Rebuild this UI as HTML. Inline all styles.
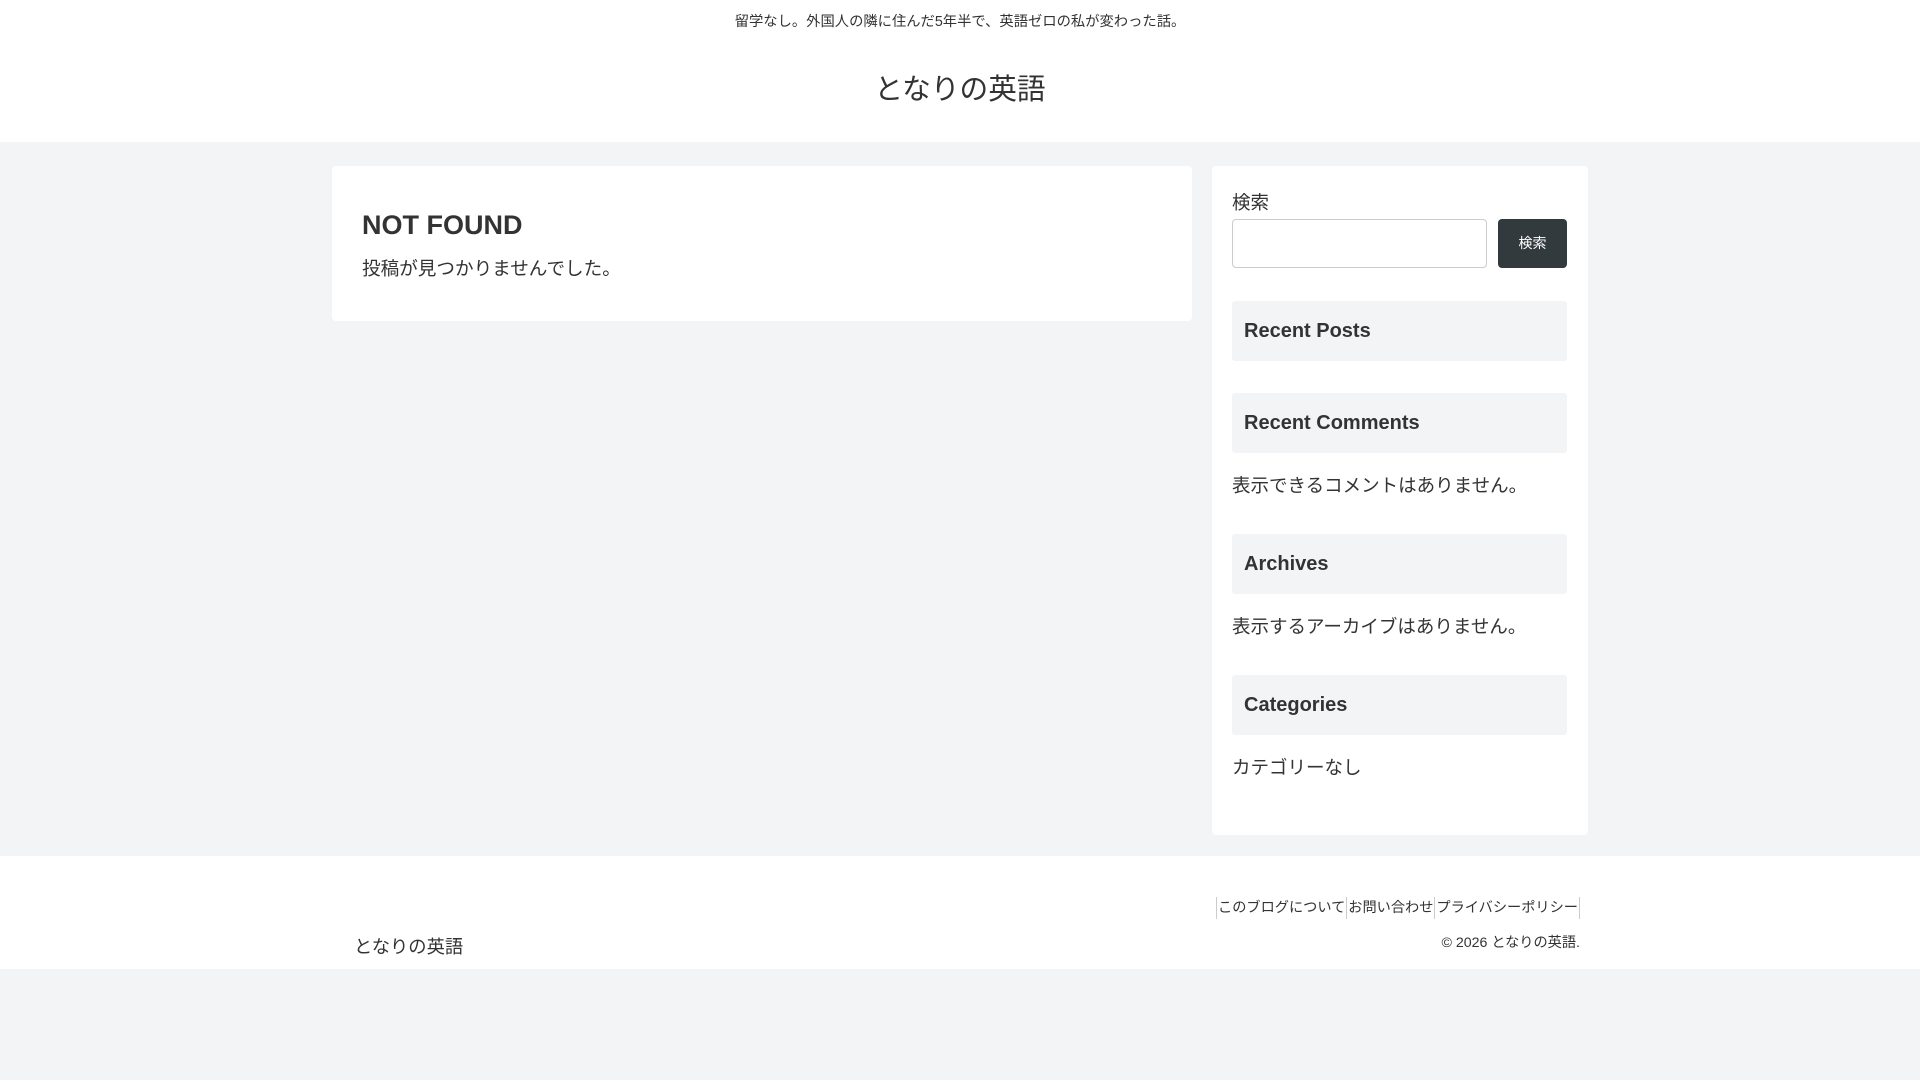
<!DOCTYPE html>
<html><head><meta charset="utf-8"><style>
*{box-sizing:border-box;margin:0;padding:0}
body{width:1920px;height:1080px;background:#f3f4f6;font-family:"Liberation Sans","Noto Sans CJK JP",sans-serif;color:#333;position:relative;overflow:hidden}
.header{position:absolute;left:0;top:0;width:1920px;height:142px;background:#fff}
.tag{position:absolute;top:10px;width:100%;text-align:center;font-size:14.3px;color:#333}
.title{position:absolute;top:67px;width:100%;text-align:center;font-size:28.7px;color:#333}
.main{position:absolute;left:332px;top:166px;width:860px;height:155px;background:#fff;border-radius:4px}
.main h1{position:absolute;left:30px;top:44px;font-size:27px;font-weight:bold}
.main p{position:absolute;left:30px;top:88px;font-size:18.6px}
.side{position:absolute;left:1212px;top:166px;width:376px;height:669px;background:#fff;border-radius:4px}
.lbl{position:absolute;left:20px;top:23px;font-size:18.5px}
.inp{position:absolute;left:20px;top:53px;width:255px;height:49px;border:1px solid #ccc;border-radius:4px}
.btn{position:absolute;left:286px;top:53px;width:69px;height:49px;background:#333a3e;border-radius:4px;color:#fff;font-size:14px;text-align:center;line-height:49px}
.wh{position:absolute;left:20px;width:335px;height:60px;background:#f3f4f6;border-radius:3px;font-size:20px;font-weight:bold;padding-left:12px;line-height:61px}
.tx{position:absolute;left:20px;font-size:18.5px}
.footer{position:absolute;left:0;top:856px;width:1920px;height:113px;background:#fff}
.fname{position:absolute;left:354px;top:77px;font-size:18.3px}
.links{position:absolute;right:340px;top:41px;font-size:14.2px;display:flex;height:22px;align-items:center}
.links span{border-left:1px solid #ccc;padding:0 1px;line-height:22px}
.links span:last-child{border-right:1px solid #ccc}
.copy{position:absolute;right:340px;top:76px;font-size:14.2px}
</style></head><body>
<div class="header"><div class="tag">留学なし。外国人の隣に住んだ5年半で、英語ゼロの私が変わった話。</div><div class="title">となりの英語</div></div>
<div class="main"><h1>NOT FOUND</h1><p>投稿が見つかりませんでした。</p></div>
<div class="side">
<div class="lbl">検索</div><div class="inp"></div><div class="btn">検索</div>
<div class="wh" style="top:135px">Recent Posts</div>
<div class="wh" style="top:227px">Recent Comments</div>
<div class="tx" style="top:306px">表示できるコメントはありません。</div>
<div class="wh" style="top:368px">Archives</div>
<div class="tx" style="top:447px">表示するアーカイブはありません。</div>
<div class="wh" style="top:509px">Categories</div>
<div class="tx" style="top:588px">カテゴリーなし</div>
</div>
<div class="footer"><div class="fname">となりの英語</div>
<div class="links"><span>このブログについて</span><span>お問い合わせ</span><span>プライバシーポリシー</span></div>
<div class="copy">© 2026 となりの英語.</div></div>
</body></html>
